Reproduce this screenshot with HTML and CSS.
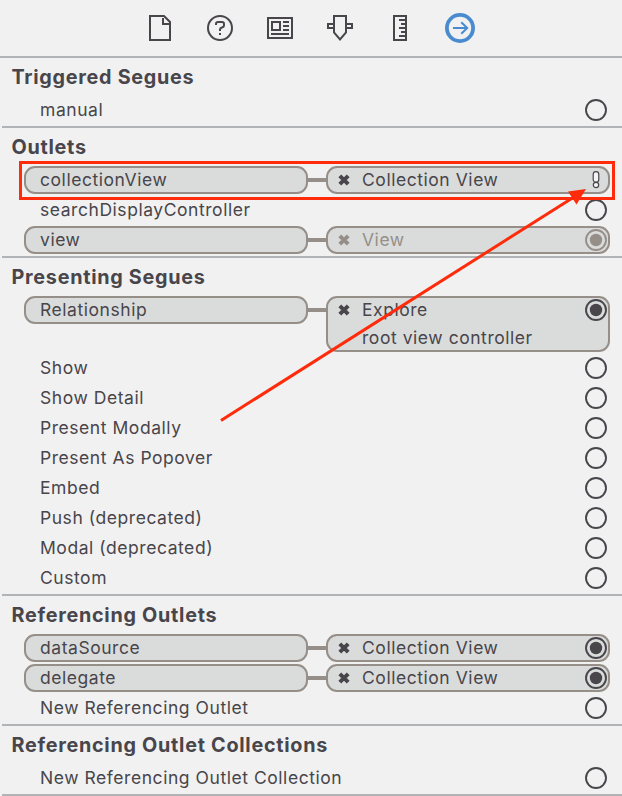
FILE: index.html
```html
<!DOCTYPE html>
<html lang="en">
<head>
<meta charset="utf-8">
<title>Connections Inspector</title>
<link rel="stylesheet" href="styles.css">
</head>
<body>
<svg class="defs" width="0" height="0">
  <symbol id="remove" viewBox="0 0 12 12"><path d="M1.8 1.8L10.2 10.2M10.2 1.8L1.8 10.2" stroke="currentColor" stroke-width="4"/></symbol>
  <symbol id="open" viewBox="0 0 22 22"><circle cx="11" cy="11" r="10" fill="none" stroke="currentColor" stroke-width="1.9"/></symbol>
  <symbol id="filled" viewBox="0 0 22 22"><circle cx="11" cy="11" r="10" fill="none" stroke="currentColor" stroke-width="1.9"/><circle cx="11" cy="11" r="6.2" fill="currentColor"/></symbol>
  <symbol id="warning" viewBox="0 0 22 22"><g fill="#f4f4f4" stroke="currentColor" stroke-width="1.2"><rect x="8.2" y="2.6" width="5.6" height="10.6" rx="2.8"/><circle cx="11" cy="16" r="2.7"/></g></symbol>
</svg>
<main class="inspector">
  <nav class="toolbar">
    <span class="tab"><svg width="30" height="30" viewBox="0 0 30 30"><path d="M5 3H19L25 9V27H5ZM18 5V11H24"/></svg></span>
    <span class="tab"><svg width="30" height="30" viewBox="0 0 30 30"><circle cx="15" cy="15" r="12"/><path d="M11 12V11Q11 9 13 9H17Q19 9 19 11V12.5Q19 14 17 14.5Q15 15 15 16.5V18M15 20V22"/></svg></span>
    <span class="tab"><svg width="30" height="30" viewBox="0 0 30 30"><path d="M3 5H27V25H3ZM7 9H15V17H7ZM18 9H24M18 13H24M18 17H24M6 21H24"/></svg></span>
    <span class="tab"><svg width="30" height="30" viewBox="0 0 30 30"><path d="M9 3H21V19.5L15 26.5L9 19.5ZM9 11H3V15H9M21 11H27V15H21"/></svg></span>
    <span class="tab"><svg width="30" height="30" viewBox="0 0 30 30"><path d="M9 3H21V27H9ZM14 7H20M16 11H20M14 15H20M16 19H20M14 23H20"/></svg></span>
    <span class="tab selected"><svg width="30" height="30" viewBox="0 0 30 30"><circle cx="15" cy="15" r="13.1" stroke-width="3.8"/><path d="M8 15H21M16.3 9.2L22.2 15L16.3 20.8"/></svg></span>
  </nav>

  <section class="group">
    <h2>Triggered Segues</h2>
    <div class="row"><span class="name">manual</span><svg class="well"><use href="#open"/></svg></div>
  </section>

  <section class="group">
    <h2>Outlets</h2>
    <div class="row linked">
      <div class="pill source">collectionView</div><i class="link"></i>
      <div class="pill target"><svg class="remove"><use href="#remove"/></svg><span class="dest">Collection View</span><svg class="well"><use href="#warning"/></svg></div>
    </div>
    <div class="row"><span class="name">searchDisplayController</span><svg class="well"><use href="#open"/></svg></div>
    <div class="row linked">
      <div class="pill source">view</div><i class="link"></i>
      <div class="pill target dim"><svg class="remove"><use href="#remove"/></svg><span class="dest">View</span><svg class="well"><use href="#filled"/></svg></div>
    </div>
  </section>

  <section class="group">
    <h2>Presenting Segues</h2>
    <div class="row linked">
      <div class="pill source">Relationship</div><i class="link"></i>
      <div class="pill target tall"><svg class="remove"><use href="#remove"/></svg><span class="dest">Explore<br>root view controller</span><svg class="well"><use href="#filled"/></svg></div>
    </div>
    <div class="row"><span class="name">Show</span><svg class="well"><use href="#open"/></svg></div>
    <div class="row"><span class="name">Show Detail</span><svg class="well"><use href="#open"/></svg></div>
    <div class="row"><span class="name">Present Modally</span><svg class="well"><use href="#open"/></svg></div>
    <div class="row"><span class="name">Present As Popover</span><svg class="well"><use href="#open"/></svg></div>
    <div class="row"><span class="name">Embed</span><svg class="well"><use href="#open"/></svg></div>
    <div class="row"><span class="name">Push (deprecated)</span><svg class="well"><use href="#open"/></svg></div>
    <div class="row"><span class="name">Modal (deprecated)</span><svg class="well"><use href="#open"/></svg></div>
    <div class="row"><span class="name">Custom</span><svg class="well"><use href="#open"/></svg></div>
  </section>

  <section class="group">
    <h2>Referencing Outlets</h2>
    <div class="row linked">
      <div class="pill source">dataSource</div><i class="link"></i>
      <div class="pill target"><svg class="remove"><use href="#remove"/></svg><span class="dest">Collection View</span><svg class="well"><use href="#filled"/></svg></div>
    </div>
    <div class="row linked">
      <div class="pill source">delegate</div><i class="link"></i>
      <div class="pill target"><svg class="remove"><use href="#remove"/></svg><span class="dest">Collection View</span><svg class="well"><use href="#filled"/></svg></div>
    </div>
    <div class="row"><span class="name">New Referencing Outlet</span><svg class="well"><use href="#open"/></svg></div>
  </section>

  <section class="group">
    <h2>Referencing Outlet Collections</h2>
    <div class="row"><span class="name">New Referencing Outlet Collection</span><svg class="well"><use href="#open"/></svg></div>
  </section>

  <svg class="annotation" width="622" height="796" viewBox="0 0 622 796">
    <rect x="20.5" y="162.5" width="593" height="36"/>
    <path d="M221 420.5L574 197"/>
    <path class="head" d="M586 189L568 191.5L576.5 204.5Z"/>
  </svg>
</main>
</body>
</html>
```

FILE: styles.css
```css
* { box-sizing: border-box; }

body {
  margin: 0;
  background: #f1f1f1;
  color: #48454b;
  font: 17.5px/28px Inter, "Liberation Sans", sans-serif;
  letter-spacing: 0.55px;
}

.defs { display: none; }

.inspector {
  position: relative;
  width: 622px;
  height: 796px;
  overflow: hidden;
}

.toolbar {
  display: flex;
  height: 58px;
  padding-left: 130px;
  border-bottom: 2px solid #b0b4b7;
}

.tab {
  display: flex;
  justify-content: center;
  align-items: center;
  width: 60px;
  height: 56px;
}

.tab svg {
  fill: none;
  stroke: #48454b;
  stroke-width: 2;
}

.tab.selected svg { stroke: #4a8bd0; }

.group {
  margin-left: 2px;
  padding-bottom: 1px;
  border-bottom: 2px solid #b0b4b7;
}

h2 {
  height: 37px;
  margin: 0;
  padding-left: 9.5px;
  font-size: 19.8px;
  font-weight: 700;
  line-height: 39px;
  letter-spacing: 0.72px;
  white-space: nowrap;
}

.row {
  display: flex;
  justify-content: space-between;
  align-items: center;
  min-height: 30px;
  padding: 1px 15px 1px 38px;
  white-space: nowrap;
}

.row.linked {
  justify-content: flex-start;
  align-items: flex-start;
  padding: 1px 12px 1px 22px;
}

.pill {
  display: flex;
  width: 284px;
  height: 28px;
  border: 2px solid #968f89;
  border-radius: 11px;
  background: #dadcdb;
  line-height: 24px;
}

.source { padding-left: 14px; }

.link {
  width: 18px;
  height: 4px;
  margin-top: 12px;
  background: #968f89;
}

.target { padding: 0 1px 0 10px; }

.target.tall { height: 56px; line-height: 28px; }
.tall .dest { margin-top: -2px; }

.dest { flex: 1; }

.remove {
  width: 12px;
  height: 12px;
  margin: 6px 12px 0 0;
}

.well {
  flex: none;
  width: 22px;
  height: 22px;
}

.pill .well { margin-top: 1px; }

.dim { color: #968f89; }

.annotation {
  position: absolute;
  inset: 0;
  fill: none;
  stroke: #ff2b0a;
  stroke-width: 3;
}

.annotation .head { fill: #ff2b0a; stroke: none; }
```
